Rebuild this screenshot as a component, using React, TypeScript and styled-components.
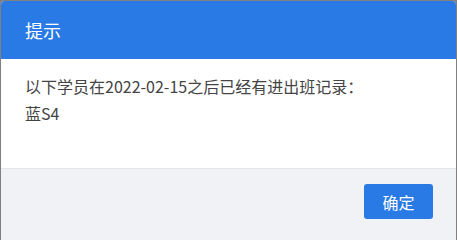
import * as React from 'react';
import styled, { createGlobalStyle } from 'styled-components';

const GlobalStyle = createGlobalStyle`
  html, body {
    margin: 0;
    padding: 0;
    height: 100%;
    overflow: hidden;
    background: #808080;
    font-family: "Noto Sans CJK SC", "Noto Sans", sans-serif;
  }
`;

const Overlay = styled.div`
  width: 100%;
  height: 100vh;
  padding: 1px 0 0 1px;
  box-sizing: border-box;
  overflow: hidden;
`;

const Dialog = styled.div`
  width: 455px;
  border-radius: 4px;
  overflow: hidden;
  background: #fff;
`;

const Header = styled.div`
  height: 58px;
  background: #2a7ae6;
  color: #fff;
  font-size: 18px;
  line-height: 58px;
  padding: 0 24px;
`;

const Body = styled.div`
  padding: 14px 24px 41px;
  color: #444;
  font-size: 16px;
  line-height: 27px;
`;

const Footer = styled.div`
  display: flex;
  justify-content: flex-end;
  padding: 15px 23px 60px;
  background: #f0f2f5;
  border-top: 1px solid #e2e5ea;
`;

const Button = styled.button`
  width: 69px;
  height: 35px;
  border: none;
  border-radius: 3px;
  background: #2a7ae6;
  color: #fff;
  font-family: inherit;
  font-size: 16px;
  cursor: pointer;
`;

export default function App() {
  return (
    <>
      <GlobalStyle />
      <Overlay>
        <Dialog>
          <Header>提示</Header>
          <Body>
            <div>以下学员在2022-02-15之后已经有进出班记录：</div>
            <div>蓝S4</div>
          </Body>
          <Footer>
            <Button>确定</Button>
          </Footer>
        </Dialog>
      </Overlay>
    </>
  );
}
